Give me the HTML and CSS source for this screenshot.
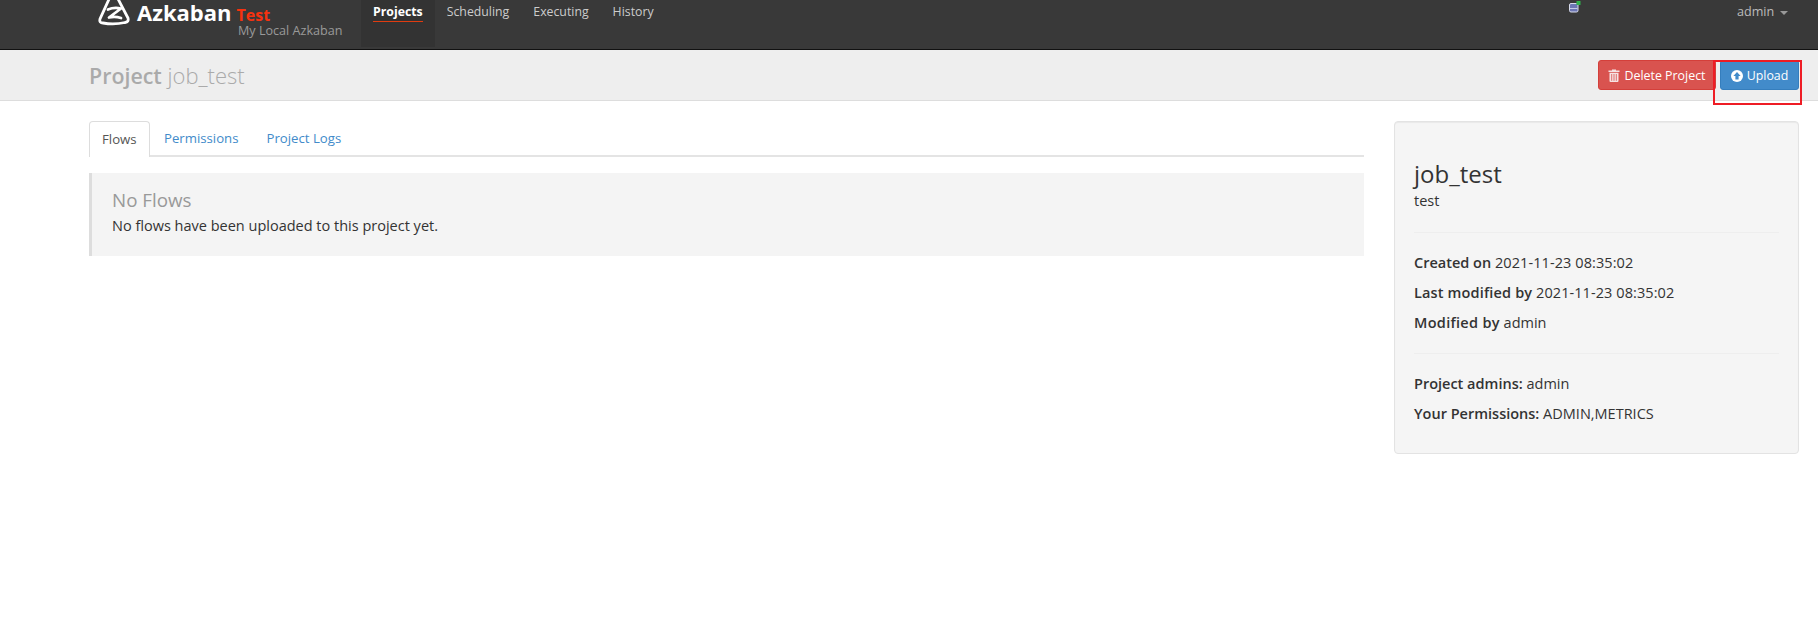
FILE: index.html
```html
<!DOCTYPE html>
<html lang="en">
<head>
<meta charset="utf-8">
<title>Azkaban - Project</title>
<link rel="stylesheet" href="styles.css">
</head>
<body>
<nav class="navbar">
  <div class="brand">
    <svg class="logo" viewBox="0 0 32 30" width="32" height="30" aria-hidden="true">
      <path d="M12 -2 L2 20 Q1 24 5 24 M19 -2 L30 19 Q31 23 27 23.500 Q16 26 5 24" fill="none" stroke="#fff" stroke-width="2.8" stroke-linecap="round"/>
      <path d="M10 10.500 Q16 8 23 9.500 L11 18.500 Q17 17 23 19" fill="none" stroke="#fff" stroke-width="2.800" stroke-linejoin="round" stroke-linecap="round"/>
    </svg>
    <div class="brand-text">
      <div class="brand-line"><span class="brand-name">Azkaban</span><span class="brand-env">Test</span></div>
      <div class="brand-sub">My Local Azkaban</div>
    </div>
  </div>
  <ul class="nav-links">
    <li class="nav-item active"><a class="nav-label">Projects</a></li>
    <li class="nav-item"><a class="nav-label">Scheduling</a></li>
    <li class="nav-item"><a class="nav-label">Executing</a></li>
    <li class="nav-item"><a class="nav-label">History</a></li>
  </ul>
  <svg class="tray-icon" viewBox="0 0 12 12" width="12" height="12" aria-hidden="true">
    <rect x="0.5" y="2.5" width="8.5" height="8.5" rx="1.500" fill="#6d76b4" stroke="#d8dcec"/>
    <rect x="1" y="7" width="7.5" height="1" fill="#c5cae6"/>
    <rect x="7.5" y="0" width="4" height="4" fill="#2fb24c"/>
  </svg>
  <div class="user">admin<span class="caret"></span></div>
</nav>

<header class="page-header">
  <h1 class="page-title"><b>Project</b> <span>job_test</span></h1>
  <div class="actions">
    <button class="btn btn-danger"><svg class="btn-icon" viewBox="0 0 12 13" width="12" height="13" aria-hidden="true"><path d="M4 1.5 V0.5 H8 V1.5 H11.5 V3 H0.5 V1.5 Z M1.5 3.8 H10.5 V12 Q10.5 13 9.5 13 H2.5 Q1.5 13 1.5 12 Z" fill="#f6e3e3"/><path d="M3.7 5 V11.8 M6 5 V11.8 M8.3 5 V11.8" stroke="#d9534f" stroke-width=".8"/></svg>Delete Project</button>
    <button class="btn btn-primary"><svg class="btn-icon" viewBox="0 0 12 12" width="12" height="12" aria-hidden="true"><circle cx="6" cy="6" r="6" fill="#fff"/><path d="M6 2 L9.6 6 H7.6 V9.6 H4.4 V6 H2.4 Z" fill="#428bca"/></svg>Upload</button>
    <div class="highlight"></div>
  </div>
</header>

<main class="content">
  <section class="main-col">
    <ul class="tabs">
      <li class="tab active">Flows</li>
      <li class="tab">Permissions</li>
      <li class="tab">Project Logs</li>
    </ul>
    <div class="callout">
      <h4 class="callout-title">No Flows</h4>
      <p class="callout-text">No flows have been uploaded to this project yet.</p>
    </div>
  </section>
  <aside class="well">
    <h3 class="well-title">job_test</h3>
    <p class="well-desc">test</p>
    <hr class="rule">
    <p class="meta"><strong>Created on</strong> <span class="stamp">2021-11-23 08:35:02</span></p>
    <p class="meta"><strong class="wide">Last modified by</strong> <span class="stamp">2021-11-23 08:35:02</span></p>
    <p class="meta"><strong class="wider">Modified by</strong> admin</p>
    <hr class="rule rule-second">
    <p class="meta"><strong>Project admins:</strong> admin</p>
    <p class="meta"><strong>Your Permissions:</strong> ADMIN,METRICS</p>
  </aside>
</main>
</body>
</html>
```
FILE: styles.css
```css
* { box-sizing: border-box; }
html, body { margin: 0; padding: 0; }
body {
  background: #fff;
  color: #333;
  font-family: "Open Sans", "Liberation Sans", sans-serif;
  font-size: 14.5px;
  line-height: 20px;
  height: 641px;
  overflow: hidden;
}
.navbar {
  display: flex;
  align-items: flex-start;
  height: 50px;
  background: #393939;
  border-bottom: 1px solid #111;
  padding-left: 98px;
  overflow: hidden;
}
.brand { display: flex; width: 263px; flex: none; }
.logo { margin-top: -1px; flex: none; }
.brand-text { margin-left: 7px; }
.brand-line { display: flex; align-items: baseline; height: 24px; }
.brand-name { color: #fff; font-size: 22px; font-weight: 700; line-height: 24px; }
.brand-env { color: #f7320f; font-size: 16px; font-weight: 700; margin-left: 5px; line-height: 18px; }
.brand-sub { color: #999; font-size: 12.6px; line-height: 13px; padding-left: 101px; white-space: nowrap; }
.nav-links { display: flex; list-style: none; margin: 0; padding: 0; height: 47px; }
.nav-item { padding: 0 12px; color: #ccc; font-size: 12.3px; line-height: 23px; }
.nav-item.active { background: #333; padding: 0 12px; color: #fff; font-weight: 700; }
.nav-label { display: inline-block; height: 22px; }
.active .nav-label { border-bottom: 1.5px solid #e03c10; }
.tray-icon { margin-left: auto; margin-top: 1px; flex: none; }
.user { color: #bbb; font-size: 12.6px; line-height: 24px; margin-left: 156px; width: 81px; flex: none; }
.caret {
  display: inline-block;
  margin-left: 6px;
  vertical-align: middle;
  border-top: 4px solid #999;
  border-left: 4px solid transparent;
  border-right: 4px solid transparent;
}
.page-header {
  display: flex;
  justify-content: space-between;
  align-items: flex-start;
  height: 51px;
  background: #eee;
  border-bottom: 1px solid #ddd;
  padding: 10px 19px 0 89px;
}
.page-title { margin: 0; font-size: 22px; line-height: 30px; font-weight: 400; color: #aaa; }
.page-title b { font-weight: 600; font-size: 21.4px; }
.page-title span { font-weight: 300; }
.actions { display: flex; gap: 4px; position: relative; }
.btn {
  display: flex;
  align-items: center;
  justify-content: center;
  gap: 4px;
  height: 30px;
  border-radius: 3px;
  border: 1px solid;
  color: #fff;
  font: inherit;
  font-size: 12.4px;
  padding: 1px 0 0;
}
.btn-danger { width: 118px; background: #d9534f; border-color: #d43f3a; }
.btn-primary { width: 79px; background: #428bca; border-color: #357ebd; }
.highlight {
  position: absolute;
  left: 115px;
  top: 0;
  width: 89px;
  height: 45px;
  border: 2px solid #ee1c25;
}
.content {
  display: grid;
  grid-template-columns: 1275px 405px;
  gap: 30px;
  padding: 20px 0 0 89px;
}
.tabs { display: flex; list-style: none; margin: 0 0 16px; padding: 0; height: 36px; border-bottom: 2px solid #e4e4e4; font-size: 13.2px; }
.tab { padding: 7px 14px 0; height: 36px; color: #428bca; }
.tab.active { color: #555; background: #fff; border: 1px solid #ddd; border-bottom: 0; border-radius: 4px 4px 0 0; padding: 7px 12px 0; width: 61px; }
.callout { height: 83px; background: #f4f4f4; border-left: 3px solid #ddd; padding: 16px 20px; }
.callout-title { margin: 0; font-size: 18.8px; line-height: 22px; font-weight: 400; color: #999; }
.callout-text { margin: 5px 0 0; }
.well {
  height: 333px;
  background: #f5f5f5;
  border: 1px solid #e3e3e3;
  border-radius: 4px;
  padding: 37px 19px 0;
  box-shadow: inset 0 1px 1px rgba(0,0,0,.05);
}
.well-title { margin: 0; font-size: 24px; line-height: 30px; font-weight: 400; }
.well-desc { margin: 2px 0 21px; }
.rule { border: 0; border-top: 1px solid #eee; margin: 0 0 20px; }
.rule-second { margin-top: 20px; }
.meta { margin: 0 0 10px; height: 20px; white-space: nowrap; }
.meta strong { font-weight: 600; }
.meta .wide { letter-spacing: .15px; }
.meta .wider { letter-spacing: .3px; }
.stamp { letter-spacing: .08px; }
```
